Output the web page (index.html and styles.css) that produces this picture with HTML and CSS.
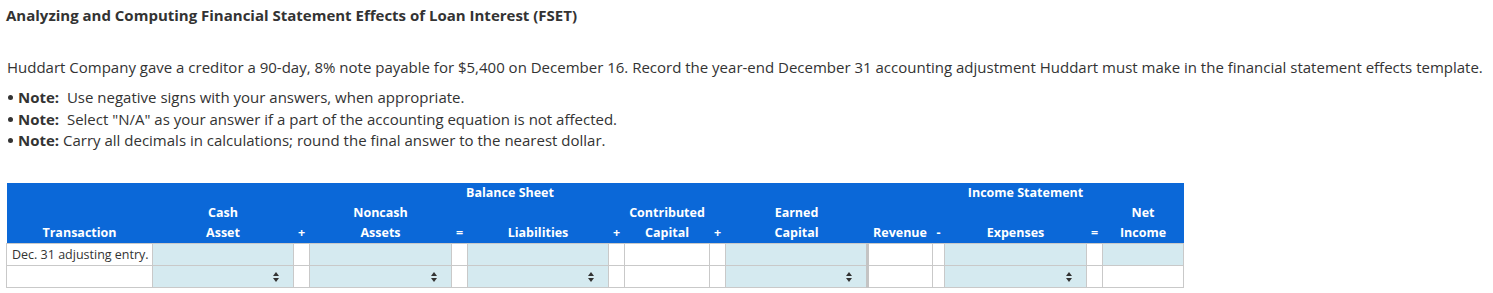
FILE: index.html
```html
<!DOCTYPE html>
<html>
<head>
<meta charset="utf-8">
<link rel="stylesheet" href="styles.css">
</head>
<body>
<div class="page">
  <h1 class="title">Analyzing and Computing Financial Statement Effects of Loan Interest (FSET)</h1>
  <p class="intro">Huddart Company gave a creditor a 90-day, 8% note payable for $5,400 on December 16. Record the year-end December 31 accounting adjustment Huddart must make in the financial statement effects template.</p>
  <ul class="notes">
    <li><b>Note:</b>&nbsp; Use negative signs with your answers, when appropriate.</li>
    <li><b>Note:</b>&nbsp; Select "N/A" as your answer if a part of the accounting equation is not affected.</li>
    <li><b>Note:</b> Carry all decimals in calculations; round the final answer to the nearest dollar.</li>
  </ul>

  <table class="fset">
    <colgroup>
      <col style="width:146px"><col style="width:141px"><col style="width:16px"><col style="width:142px"><col style="width:16px"><col style="width:141px"><col style="width:16px"><col style="width:85px"><col style="width:16px"><col style="width:142px"><col style="width:65px"><col style="width:12px"><col style="width:142px"><col style="width:16px"><col style="width:81px">
    </colgroup>
    <thead>
      <tr class="group">
        <th></th>
        <th colspan="9">Balance Sheet</th>
        <th colspan="5">Income Statement</th>
      </tr>
      <tr class="cols">
        <th>Transaction</th>
        <th>Cash<br>Asset</th>
        <th>+</th>
        <th>Noncash<br>Assets</th>
        <th>=</th>
        <th>Liabilities</th>
        <th>+</th>
        <th>Contributed<br>Capital</th>
        <th>+</th>
        <th>Earned<br>Capital</th>
        <th>Revenue</th>
        <th>-</th>
        <th>Expenses</th>
        <th>=</th>
        <th>Net<br>Income</th>
      </tr>
    </thead>
    <tbody>
      <tr>
        <td class="label">Dec. 31 adjusting entry.</td>
        <td class="in"></td>
        <td></td>
        <td class="in"></td>
        <td></td>
        <td class="in"></td>
        <td></td>
        <td></td>
        <td></td>
        <td class="in"></td>
        <td class="rev"></td>
        <td></td>
        <td class="in"></td>
        <td></td>
        <td class="in"></td>
      </tr>
      <tr>
        <td class="label"></td>
        <td class="in sel"><span class="spin"></span></td>
        <td></td>
        <td class="in sel"><span class="spin"></span></td>
        <td></td>
        <td class="in sel"><span class="spin"></span></td>
        <td></td>
        <td></td>
        <td></td>
        <td class="in sel"><span class="spin"></span></td>
        <td class="rev"></td>
        <td></td>
        <td class="in sel"><span class="spin"></span></td>
        <td></td>
        <td></td>
      </tr>
    </tbody>
  </table>
</div>
</body>
</html>
```

FILE: styles.css
```css
html, body {
  margin: 0;
  padding: 0;
  background: #fff;
}
body {
  font-family: "Open Sans", "DejaVu Sans", sans-serif;
  color: #333;
}
.page {
  padding: 4px 6px 0 6px;
}
.title {
  margin: 0;
  font-size: 15px;
  font-weight: 700;
  line-height: 22px;
  color: #333;
}
.intro {
  margin: 30px 0 0 1px;
  font-size: 15px;
  line-height: 22px;
}
.notes {
  list-style: none;
  margin: 9px 0 0 0;
  padding: 0;
  font-size: 15px;
  line-height: 21.5px;
}
.notes li::before {
  content: "";
  display: inline-block;
  width: 5px;
  height: 5px;
  border-radius: 50%;
  background: #333;
  margin: 0 5px 0 2px;
  vertical-align: 3px;
}
.notes b {
  font-weight: 700;
}
.fset {
  margin-top: 31px;
  border-collapse: collapse;
  table-layout: fixed;
  width: 1177px;
  font-size: 12.5px;
}
.fset th {
  background: #0b68d8;
  color: #fff;
  font-weight: 700;
  text-align: center;
  padding: 0;
  line-height: 20px;
  vertical-align: bottom;
  white-space: nowrap;
  overflow: visible;
}
.fset tr.group th {
  height: 20px;
}
.fset tr.cols th {
  height: 40px;
}
.fset td {
  border: 1px solid #c9c9c9;
  height: 21px;
  padding: 0;
  background: #fff;
}
.fset td.label {
  padding-left: 5px;
  white-space: nowrap;
  color: #333;
}
.fset td.in {
  background: #d5eaf0;
}
.fset td.rev {
  border-left: 3px solid #c4c4c4;
}
.fset td.sel {
  text-align: right;
  padding-right: 13px;
}
.spin {
  display: inline-block;
  width: 7px;
  height: 10px;
  vertical-align: middle;
  position: relative;
}
.spin::before,
.spin::after {
  content: "";
  position: absolute;
  left: 0;
  width: 0;
  height: 0;
  border-left: 3.5px solid transparent;
  border-right: 3.5px solid transparent;
}
.spin::before {
  top: 0;
  border-bottom: 4px solid #333;
}
.spin::after {
  bottom: 0;
  border-top: 4px solid #333;
}
```
